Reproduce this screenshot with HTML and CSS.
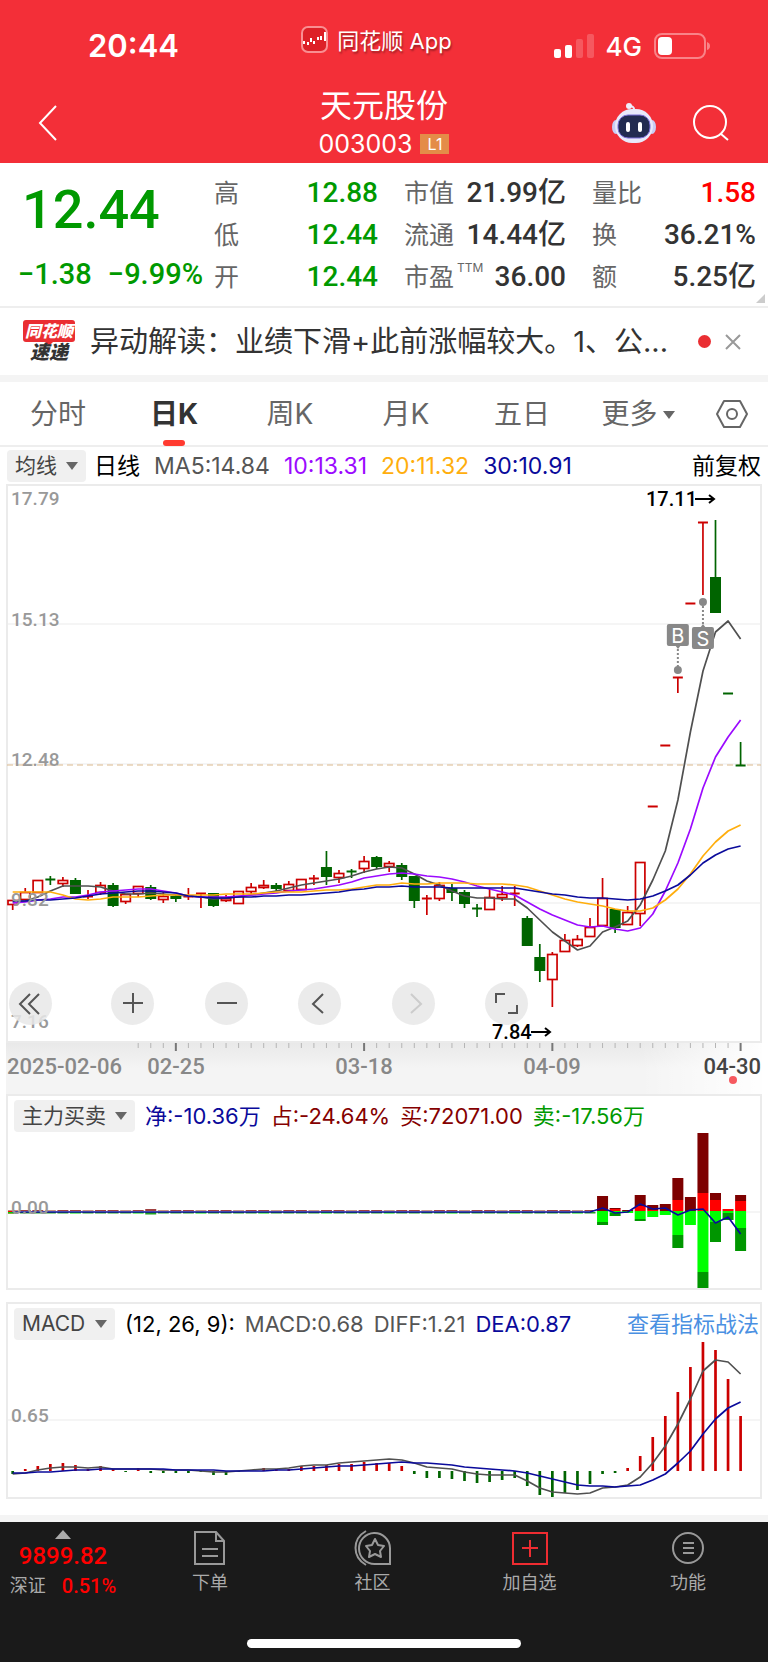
FILE: index.html
```html
<!DOCTYPE html>
<html lang="zh-CN">
<head>
    <meta charset="UTF-8">
    <meta name="viewport" content="width=device-width, initial-scale=1.0">
    <title>天元股份 003003</title>
    <link rel="stylesheet" href="styles.css">
</head>
<body>
    <header class="top">
        <div class="status">
            <span class="time">20:44</span>
            <span class="app">
                <svg width="27" height="27" viewBox="0 0 27 27">
                    <rect x="1" y="1" width="25" height="25" rx="6" fill="#dd2027" stroke="#f98f92" stroke-width="2"/>
                    <path d="M3 18v-3M7 19v-3M10 16v-4M13 18v-3M17 14v-3M20 14v-4M24 15V6" stroke="#fff" stroke-width="2"/>
                </svg>
                同花顺 App
            </span>
            <span class="signal">
                <svg width="40" height="26" viewBox="0 0 40 26" fill="#fff">
                    <rect x="0" y="16" width="7" height="9" rx="2"/>
                    <rect x="11" y="12" width="7" height="13" rx="2"/>
                    <rect x="22" y="6" width="7" height="19" rx="2" opacity=".2"/>
                    <rect x="33" y="1" width="7" height="24" rx="2" opacity=".2"/>
                </svg>
                4G
                <svg width="57" height="26" viewBox="0 0 57 26">
                    <rect x="1" y="1" width="50" height="24" rx="7" fill="none" stroke="#f98388" stroke-width="2"/>
                    <rect x="4" y="4" width="14" height="18" rx="4" fill="#fff"/>
                    <path d="M53 9q3 1 3 4t-3 4z" fill="#f98388"/>
                </svg>
            </span>
        </div>
        <div class="titleBar">
            <button class="back" aria-label="返回">
                <svg width="20" height="36" viewBox="0 0 20 36" fill="none" stroke="#fff" stroke-width="2"><path d="M18 1L2 18l16 17"/></svg>
            </button>
            <div class="stock">
                <h1>天元股份</h1>
                <p>003003 <span class="level">L1</span></p>
            </div>
            <div class="tools">
                <button aria-label="助手">
                    <svg width="44" height="42" viewBox="0 0 44 42">
                        <path d="M22 10q1-5-3-6" fill="none" stroke="#e9e8fa" stroke-width="2"/>
                        <circle cx="17" cy="4" r="3" fill="#eeeefc"/>
                        <ellipse cx="4" cy="25" rx="4" ry="7" fill="#c9cdf5"/>
                        <ellipse cx="40" cy="25" rx="4" ry="7" fill="#c9cdf5"/>
                        <rect x="3" y="7" width="38" height="34" rx="17" fill="#e8e9fa"/>
                        <rect x="6" y="13" width="32" height="23" rx="10" fill="#222b50" stroke="#7b6fd8" stroke-width="1"/>
                        <path d="M16 22v6M28 22v6" stroke="#fff" stroke-width="4" stroke-linecap="round"/>
                    </svg>
                </button>
                <button aria-label="搜索">
                    <svg width="38" height="38" viewBox="0 0 38 38" fill="none" stroke="#fff" stroke-width="2"><circle cx="18" cy="18" r="16"/><path d="M29 30l7 6"/></svg>
                </button>
            </div>
        </div>
    </header>

    <section class="quote">
        <div class="priceBox">
            <strong class="price">12.44</strong>
            <div class="change"><span>−1.38</span><span>−9.99%</span></div>
        </div>
        <dl>
            <div><dt>高</dt><dd class="green">12.88</dd></div>
            <div><dt>低</dt><dd class="green">12.44</dd></div>
            <div><dt>开</dt><dd class="green">12.44</dd></div>
        </dl>
        <dl>
            <div><dt>市值</dt><dd>21.99亿</dd></div>
            <div><dt>流通</dt><dd>14.44亿</dd></div>
            <div><dt>市盈<sup>TTM</sup></dt><dd>36.00</dd></div>
        </dl>
        <dl>
            <div><dt>量比</dt><dd class="red">1.58</dd></div>
            <div><dt>换</dt><dd>36.21%</dd></div>
            <div><dt>额</dt><dd>5.25亿</dd></div>
        </dl>
    </section>

    <section class="news">
        <div class="newsLogo"><b>同花顺</b><i>速递</i></div>
        <a href="#">异动解读：业绩下滑+此前涨幅较大。1、公...</a>
        <span class="dot"></span>
        <button aria-label="关闭">
            <svg width="16" height="18" viewBox="0 0 16 18" stroke="#999" stroke-width="2"><path d="M1 2l14 14M15 2L1 16"/></svg>
        </button>
    </section>

    <nav class="tabs">
        <button>分时</button>
        <button class="active">日K</button>
        <button>周K</button>
        <button>月K</button>
        <button>五日</button>
        <button class="more">更多</button>
        <button aria-label="设置">
            <svg width="32" height="30" viewBox="0 0 32 30" fill="none" stroke="#666" stroke-width="2"><path d="M8 2h16l7 13-7 13H8L1 15z" stroke-linejoin="round"/><circle cx="16" cy="15" r="5"/></svg>
        </button>
    </nav>

    <section class="legend maRow">
        <label class="pick"><select aria-label="均线"><option>均线</option></select></label>
        <span class="black">日线</span>
        <span class="gray">MA5:14.84</span>
        <span class="purple">10:13.31</span>
        <span class="orange">20:11.32</span>
        <span class="blue">30:10.91</span>
        <span class="right black">前复权</span>
    </section>

    <main>
        <section class="kline">
            <svg id="kChart" viewBox="0 484 768 610"></svg>
            <div class="zoomBar">
                <button aria-label="最早"><svg viewBox="0 0 43 43"><path d="M21 12L11 22l10 10M30 12L20 22l10 10"/></svg></button>
                <button aria-label="放大"><svg viewBox="0 0 43 43"><path d="M12 21h20M22 11v20"/></svg></button>
                <button aria-label="缩小"><svg viewBox="0 0 43 43"><path d="M12 21h20"/></svg></button>
                <button aria-label="向左"><svg viewBox="0 0 43 43"><path d="M25 12L15 22l10 9"/></svg></button>
                <button aria-label="向右" disabled><svg viewBox="0 0 43 43"><path d="M19 12l10 10-10 9"/></svg></button>
                <button aria-label="全屏"><svg viewBox="0 0 43 43"><path d="M11 21v-9h9M32 23v8h-9"/></svg></button>
            </div>
        </section>

        <section class="panel">
            <div class="legend">
                <label class="pick"><select aria-label="指标"><option>主力买卖</option></select></label>
                <span class="blue">净:-10.36万</span>
                <span class="darkred">占:-24.64%</span>
                <span class="darkred">买:72071.00</span>
                <span class="green">卖:-17.56万</span>
            </div>
            <svg id="flowChart" viewBox="8 1132 752 156"></svg>
        </section>

        <section class="panel">
            <div class="legend">
                <label class="pick"><select aria-label="指标"><option>MACD</option></select></label>
                <span class="black">(12, 26, 9):</span>
                <span class="gray">MACD:0.68</span>
                <span class="gray">DIFF:1.21</span>
                <span class="blue">DEA:0.87</span>
                <a class="right" href="#">查看指标战法</a>
            </div>
            <svg id="macdChart" viewBox="8 1341 752 157"></svg>
        </section>
    </main>

    <footer>
        <div class="bottomNav">
            <a class="index" href="#">
                <span class="up"></span>
                <strong>9899.82</strong>
                <span class="indexRow">深证 <b>0.51%</b></span>
            </a>
            <a href="#">
                <svg width="34" height="36" viewBox="0 0 34 36"><path d="M2 2h21l8 9v23H2zM23 2v9h8M9 19h16M9 26h16"/></svg>
                下单
            </a>
            <a href="#">
                <svg width="38" height="36" viewBox="0 0 38 36"><path d="M36 34H21A15.500 15.500 0 1 1 36 18zM12 1C-2 9-2 27 12 35"/><path d="M21 9l3 6 6 1-4 5 1 6-6-3-6 3 1-6-4-5 6-1z" stroke-linejoin="round"/></svg>
                社区
            </a>
            <a href="#">
                <svg class="add" width="36" height="36" viewBox="0 0 36 36"><path d="M1 3h34v31H1zM18 10v17M10 18h16"/></svg>
                加自选
            </a>
            <a href="#">
                <svg width="34" height="36" viewBox="0 0 34 36"><circle cx="17" cy="18" r="15"/><path d="M12 13h11M12 18h11M12 23h11"/></svg>
                功能
            </a>
        </div>
        <div class="homeBar"></div>
    </footer>

    <script>
        const X0 = 12.7, STEP = 12.55;
        const RED = "#cc0000", GREEN = "#006400", BLUE = "#0a0a9b", GRAY = "#505050";
        const x = i => X0 + STEP * i;

        const line = (x1, y1, x2, y2, color, w, extra = "") =>
            `<line x1="${x1}" y1="${y1}" x2="${x2}" y2="${y2}" stroke="${color}" stroke-width="${w}" ${extra}/>`;
        const rect = (px, y, w, h, fill, extra = "") =>
            `<rect x="${px}" y="${y}" width="${w}" height="${h}" fill="${fill}" ${extra}/>`;
        const text = (px, y, cls, str) => `<text x="${px}" y="${y}" class="${cls}">${str}</text>`;
        const curve = (ys, color) =>
            `<polyline points="${ys.map((y, i) => x(i).toFixed(1) + "," + y).join(" ")}" fill="none" stroke="${color}" stroke-width="1.700" stroke-linejoin="round"/>`;

        // colore, corpo alto, corpo basso, massimo, minimo
        const candles = [
            ["r",900,904,900,910],["r",892,899,888,900],["r",880,892,880,892],["g",879,880,876,885],["r",880,883,877,887],
            ["g",880,894,878,894],["r",896,897,890,899],["r",885,892,882,895],["g",885,906,883,907],["r",894,901,894,904],
            ["r",886,893,886,897],["g",887,899,885,900],["r",896,899,892,903],["g",896,899,895,902],["r",896,897,888,900],
            ["r",893,894,893,908],["g",893,906,893,907],["r",898,900,895,902],["r",891,903,891,903],["r",887,891,883,894],
            ["r",885,887,880,889],["g",885,889,883,891],["r",884,890,881,891],["r",879,889,879,890],["r",878,879,875,885],
            ["g",867,877,851,885],["r",873,877,870,883],["g",871,872,869,878],["r",861,868,856,873],["g",857,867,856,869],
            ["r",863,866,861,872],["g",865,877,863,880],["g",876,901,876,908],["r",898,899,895,915],["r",885,898,882,901],
            ["g",888,893,884,901],["g",892,904,890,908],["g",908,909,904,917],["r",897,909,889,909],["r",894,897,886,901],
            ["r",893,894,886,906],["g",918,946,916,946],["g",957,971,944,982],["r",954,979,952,1007],["r",940,951,934,951],
            ["r",939,945,935,947],["r",927,936,918,936],["r",898,925,878,927],["g",909,928,909,933],["r",912,924,906,924],
            ["r",862,913,862,926],["r",806,806,806,806],["r",745,745,745,745],["r",677,677,677,693],["r",603,603,603,603],
            ["r",522,522,522,595],["g",577,613,520,613],["g",693,693,693,693],["g",765,765,742,765]
        ];
        const ma5 = [902,901,897,891,886,886,886,887,891,894,894,893,894,895,896,897,899,898,897,895,893,891,888,885,883,881,879,876,872,869,867,868,874,881,885,891,896,898,898,899,899,908,920,932,941,950,946,932,927,921,905,880,851,800,732,671,632,621,639];
        const ma10 = [903,902,900,899,897,897,895,892,891,890,889,889,891,893,896,897,897,897,896,895,894,893,891,890,889,887,885,882,878,876,874,873,874,876,877,879,882,886,889,892,895,902,909,915,920,925,927,926,929,931,928,914,891,863,829,788,757,737,720];
        const ma20 = [892,892,892,892,895,899,900,899,897,897,897,896,895,895,895,895,895,894,894,894,893,892,892,892,891,890,890,889,887,885,885,883,884,884,883,883,883,884,884,884,885,887,891,895,899,902,904,906,909,911,911,908,900,889,874,856,842,831,825];
        const ma30 = [901,901,900,900,899,898,896,894,893,892,891,891,892,893,896,897,898,898,897,897,896,896,895,895,894,893,892,890,889,887,887,886,887,887,887,888,888,888,888,888,888,890,892,894,895,897,898,898,899,900,899,896,891,885,875,863,855,849,846];

        function drawKline() {
            let s = `<defs><linearGradient id="axisBg" x1="0" x2="0" y1="0" y2="1"><stop offset="0" stop-color="#e9e9e9"/><stop offset=".5" stop-color="#f4f4f4"/></linearGradient>
                <linearGradient id="fade" x1="0" x2="1" y1="0" y2="0"><stop offset="0" stop-color="#fff" stop-opacity="0"/><stop offset="1" stop-color="#fff"/></linearGradient></defs>`;
            s += rect(6, 1043, 756, 51, "url(#axisBg)") + rect(640, 1043, 128, 51, "url(#fade)");
            s += rect(7, 485, 754, 557, "none", 'stroke="#ebebeb" stroke-width="2"');
            [624, 764, 903].forEach(y => s += line(7, y, 761, y, "#ebebeb", 1));
            s += line(7, 765, 761, 765, "#dcb98c", 1, 'stroke-dasharray="6 4"');

            candles.forEach(([c, top, bottom, high, low], i) => {
                const color = c === "r" ? RED : GREEN;
                const cx = x(i);
                if (bottom - top < 2) {
                    s += line(cx - 5, top + .5, cx + 5, top + .5, color, 2);
                    if (low > high) s += line(cx, high, cx, low, color, 1.7);
                    return;
                }
                if (high < top) s += line(cx, high, cx, top, color, 1.7);
                if (low > bottom) s += line(cx, bottom, cx, low, color, 1.7);
                if (c === "g") s += rect(cx - 5.5, top, 11, bottom - top, color);
                else s += rect(cx - 4.7, top + .5, 9.4, bottom - top, "#fff", `stroke="${color}" stroke-width="1.700"`);
            });
            s += curve(ma5, GRAY) + curve(ma10, "#9b0aff") + curve(ma20, "#ffae0d") + curve(ma30, BLUE);

            s += text(11, 505, "scale", "17.79") + text(11, 626, "scale", "15.13") + text(11, 766, "scale", "12.48");
            s += text(11, 906, "scale", "9.82") + text(11, 1028, "scale", "7.16");
            s += text(646, 506, "mark", "17.11") + line(695, 499, 713, 499, "#000", 2) + '<path d="M709 495l5 4-5 4" fill="none" stroke="#000" stroke-width="2"/>';
            s += text(492, 1039, "mark", "7.84") + line(531, 1032, 549, 1032, "#000", 2) + '<path d="M545 1028l5 4-5 4" fill="none" stroke="#000" stroke-width="2"/>';

            // punti di acquisto e vendita
            s += line(x(53), 645, x(53), 667, "#888", 2, 'stroke-dasharray="2 2"') + `<circle cx="${x(53)}" cy="670" r="4" fill="#888"/>`;
            s += rect(x(53) - 11, 624, 22, 22, "#888", 'rx="2"') + `<path d="M675 645l3 4 3-4z" fill="#888"/>` + text(x(53), 643, "badge", "B");
            s += line(x(55), 606, x(55), 628, "#888", 2, 'stroke-dasharray="2 2"') + `<circle cx="${x(55)}" cy="602" r="4" fill="#888"/>`;
            s += rect(x(55) - 11, 627, 22, 22, "#888", 'rx="2"') + `<path d="M700 628l3-4 3 4z" fill="#888"/>` + text(x(55), 646, "badge", "S");

            for (let i = 10; i < 59; i++) {
                const big = (i - 13) % 15 === 0;
                s += line(x(i), 1043, x(i), big ? 1051 : 1048, big ? "#777" : "#b5b5b5", big ? 2 : 1);
            }
            s += text(7, 1074, "date", "2025-02-06") + text(176, 1074, "date mid", "02-25") + text(364, 1074, "date mid", "03-18");
            s += text(552, 1074, "date mid", "04-09") + text(761, 1074, "date last", "04-30");
            s += '<circle cx="733" cy="1080" r="4" fill="#f6595f"/>';
            document.getElementById("kChart").innerHTML = s;
        }

        // indice, rosso scuro, rosso, verde, verde scuro
        const flow = [
            [47,1196,1211,1222,1225],[48,1208,1209,1213,1216],[49,1210,1211,1213,1213],[50,1195,1206,1219,1221],
            [51,1205,1210,1217,1217],[52,1204,1211,1215,1215],[53,1178,1200,1235,1248],[54,1197,1211,1225,1225],
            [55,1133,1193,1272,1288],[56,1193,1200,1222,1242],[57,1209,1209,1213,1220],[58,1195,1201,1228,1251]
        ];
        const flowTail = [1208,1213,1212,1204,1209,1208,1215,1210,1209,1223,1217,1234];

        function drawFlow() {
            let s = line(8, 1212, 760, 1212, "#ebebeb", 1);
            s += line(8, 1212, 14, 1212, "#f00", 3);
            for (let i = 0; i < 47; i++) {
                const h = i === 11 ? 2 : 1;
                s += rect(x(i) - 5.5, 1211 - h, 11, h, i % 3 ? "#a04040" : "#c89080");
                s += rect(x(i) - 5.5, 1212, 11, h + .5, i % 5 ? "#20a020" : "#00d800");
            }
            flow.forEach(([i, a, b, c, d]) => {
                const px = x(i) - 5.5;
                s += rect(px, a, 11, b - a, "#7d0000") + rect(px, b, 11, 1211 - b, "#f00");
                s += rect(px, 1211, 11, c - 1211, "#0f0") + rect(px, c, 11, d - c, "#009600");
            });
            s += curve(Array(47).fill(1212).concat(flowTail), BLUE);
            s += text(11, 1214, "scale", "0.00");
            document.getElementById("flowChart").innerHTML = s;
        }

        const macd = [1475,1470,1467,1465,1464,1466,1470,1467,1470,1473,1469,1474,1474,1474,1474,1473,1476,1476,1473,1472,1469,1470,1470,1467,1467,1466,1465,1465,1463,1464,1464,1467,1475,1479,1479,1480,1482,1484,1483,1481,1479,1487,1496,1498,1494,1491,1485,1475,1474,1469,1457,1438,1417,1393,1368,1343,1351,1380,1417];
        const diff = [1475,1474,1471,1469,1468,1468,1469,1468,1470,1470,1470,1470,1471,1471,1471,1472,1473,1473,1472,1471,1470,1470,1469,1467,1466,1466,1464,1463,1462,1461,1460,1461,1464,1468,1469,1470,1473,1475,1476,1476,1476,1482,1489,1493,1494,1495,1494,1489,1488,1486,1478,1464,1447,1425,1400,1372,1361,1363,1375];
        const dea = [1474,1474,1473,1473,1472,1471,1471,1470,1470,1470,1470,1470,1470,1471,1471,1471,1471,1472,1472,1472,1472,1471,1471,1470,1469,1468,1467,1467,1466,1465,1464,1463,1464,1464,1465,1466,1468,1469,1470,1471,1472,1474,1477,1480,1483,1486,1487,1487,1488,1487,1486,1481,1475,1464,1452,1435,1420,1409,1403];

        function drawMacd() {
            let s = line(8, 1421, 760, 1421, "#ebebeb", 1);
            macd.forEach((y, i) => s += line(x(i), 1472, x(i), y, y < 1472 ? RED : GREEN, 2.7));
            s += curve(diff, GRAY) + curve(dea, BLUE);
            s += text(11, 1423, "scale", "0.65");
            document.getElementById("macdChart").innerHTML = s;
        }

        drawKline();
        drawFlow();
        drawMacd();
    </script>
</body>
</html>
```
FILE: styles.css
```css
* {
    box-sizing: border-box;
}

body {
    margin: 0;
    background: white;
    font-family: Inter, "Noto Sans CJK SC", sans-serif;
    color: #333;
}

button, select {
    font-family: inherit;
    border: none;
    background: none;
    padding: 0;
    cursor: pointer;
}

a {
    text-decoration: none;
    color: inherit;
}

svg {
    display: block;
}

h1, p, dl, dd {
    margin: 0;
}

/* header */
.top {
    background: #f32f38;
    color: white;
    height: 163px;
}

.status {
    display: grid;
    grid-template-columns: 1fr auto 1fr;
    height: 83px;
    padding: 26px 57px 0 42px;
}

.time {
    padding-left: 46px;
    font-size: 31px;
    line-height: 40px;
    font-weight: 600;
}

.app {
    display: flex;
    gap: 9px;
    font-size: 22px;
    line-height: 30px;
    text-shadow: 1px 2px 2px rgba(0, 0, 0, .35);
}

.signal {
    display: flex;
    justify-content: flex-end;
    align-items: center;
    gap: 12px;
    height: 40px;
    font-size: 26px;
    font-weight: 500;
}

.titleBar {
    display: grid;
    grid-template-columns: 1fr auto 1fr;
    align-items: center;
    height: 80px;
    padding: 0 38px;
}

.back {
    justify-self: start;
}

.stock {
    text-align: center;
}

.stock h1 {
    font-size: 32px;
    line-height: 42px;
    font-weight: 400;
}

.stock p {
    display: flex;
    align-items: center;
    justify-content: center;
    gap: 8px;
    font-size: 25px;
    line-height: 34px;
}

.level {
    background: #e48c48;
    font-size: 16px;
    line-height: 20px;
    width: 29px;
}

.tools {
    display: flex;
    justify-content: flex-end;
    align-items: center;
    gap: 36px;
}

/* quotazione */
.quote {
    position: relative;
    display: grid;
    grid-template-columns: 196fr 190fr 188fr 164fr;
    padding: 9px 12px 9px 18px;
    height: 145px;
    border-bottom: 2px solid #eee;
}

.quote::after {
    content: "";
    position: absolute;
    right: 3px;
    bottom: 3px;
    border-left: 9px solid transparent;
    border-bottom: 9px solid #ccc;
}

.priceBox, .quote dd {
    font-family: Roboto, "Noto Sans CJK SC", sans-serif;
    font-weight: 500;
    white-space: nowrap;
}

.priceBox {
    color: #009900;
    padding-right: 11px;
}

.price {
    display: block;
    padding-left: 4px;
    font-size: 54px;
    line-height: 76px;
    font-weight: 500;
}

.change {
    display: flex;
    justify-content: space-between;
    font-size: 29px;
    line-height: 52px;
}

.quote dl {
    padding-right: 26px;
}

.quote dl:last-child {
    padding-right: 0;
}

.quote dl div {
    display: flex;
    justify-content: space-between;
    align-items: center;
    height: 42px;
}

.quote dt {
    display: flex;
    font-size: 25px;
    line-height: 42px;
    color: #666;
    white-space: nowrap;
}

.quote sup {
    margin-left: 3px;
    font-size: 12px;
    line-height: 24px;
}

.quote dd {
    font-size: 28px;
    line-height: 42px;
}

.quote .green, .green {
    color: #009900;
}

.quote .red {
    color: #ff0000;
}

/* notizie */
.news {
    display: flex;
    align-items: center;
    height: 74px;
    padding: 0 27px 0 22px;
    border-bottom: 7px solid #f4f4f4;
}

.newsLogo {
    display: flex;
    flex-direction: column;
    align-items: center;
    width: 54px;
    margin-right: 14px;
    font-style: italic;
    font-weight: 900;
}

.newsLogo b {
    background: #ea2e32;
    color: white;
    width: 52px;
    border-radius: 3px;
    font-size: 16px;
    line-height: 22px;
    text-align: center;
}

.newsLogo i {
    font-size: 19px;
    line-height: 22px;
}

.newsLogo i::before {
    content: "";
    display: block;
    width: 0;
    margin: 0 auto -4px;
    border: 4px solid transparent;
    border-top-color: #ea2e32;
    border-bottom: none;
}

.news a {
    flex: 1;
    white-space: nowrap;
    font-size: 29px;
    line-height: 44px;
}

.dot {
    width: 13px;
    height: 13px;
    border-radius: 50%;
    background: #ea2e32;
    margin-right: 14px;
}

/* schede */
.tabs {
    display: grid;
    grid-template-columns: repeat(6, 116fr) 72fr;
    height: 65px;
    border-bottom: 2px solid #eee;
}

.tabs button {
    position: relative;
    font-size: 28px;
    line-height: 64px;
    color: #666;
}

.tabs svg {
    margin: 0 auto;
}

.tabs .active {
    color: #333;
    font-weight: bold;
}

.tabs .active::after {
    content: "";
    position: absolute;
    left: 50%;
    bottom: 0;
    width: 22px;
    height: 6px;
    margin-left: -11px;
    border-radius: 3px;
    background: #ff3b30;
}

.more::after, .pick::after {
    content: "";
    display: inline-block;
    border: 6px solid transparent;
    border-top: 8px solid #666;
    border-bottom: none;
}

.more::after {
    margin-left: 5px;
    vertical-align: 5px;
}

/* legenda */
.legend {
    display: flex;
    align-items: center;
    gap: 10px;
    height: 36px;
    padding: 4px 1px 0 6px;
    font-size: 22px;
    line-height: 32px;
    white-space: nowrap;
}

.maRow {
    gap: 14px;
    height: 37px;
    padding: 0 7px;
    font-size: 23px;
}

.maRow .pick {
    margin-right: -6px;
}

.pick {
    display: flex;
    align-items: center;
    gap: 9px;
    height: 32px;
    padding: 0 8px;
    border-radius: 4px;
    background: #f0f0f0;
}

.pick select {
    appearance: none;
    font-size: 21px;
    line-height: 32px;
    color: #444;
}

.right {
    margin-left: auto;
}

.legend a {
    color: #4a90e2;
}

.black { color: #000; }
.gray { color: #555; }
.purple { color: #9b0aff; }
.orange { color: #ffae0d; }
.blue { color: #0a0a9b; }
.darkred { color: #850000; }

/* grafici */
.kline {
    position: relative;
}

.kline > svg, .panel > svg {
    width: 100%;
}

.panel {
    margin: 0 6px 12px;
    border: 2px solid #ebebeb;
}

.zoomBar {
    position: absolute;
    left: 9px;
    right: 240px;
    bottom: 69px;
    display: flex;
    justify-content: space-between;
}

.zoomBar button {
    width: 43px;
    height: 43px;
    border-radius: 50%;
    background: rgba(232, 232, 232, .85);
}

.zoomBar button:first-child {
    margin-right: 9px;
}

.zoomBar path {
    fill: none;
    stroke: #555;
    stroke-width: 2;
}

.zoomBar button:disabled path {
    stroke: #ccc;
}

.scale, .date, .mark {
    font-family: Roboto, sans-serif;
    font-size: 19px;
    fill: #999;
    font-weight: 500;
}

.mark {
    font-size: 20px;
    fill: #000;
}

.date {
    font-size: 22px;
    fill: #888;
}

.mid {
    text-anchor: middle;
}

.last {
    text-anchor: end;
    fill: #444;
}

.badge {
    font-size: 20px;
    fill: #fff;
    text-anchor: middle;
}

/* barra in basso */
footer {
    background: #1a1a1a;
    border-top: 7px solid #f4f4f4;
    margin-top: 16px;
    height: 148px;
    color: #aaa;
}

.bottomNav {
    display: grid;
    grid-template-columns: 126fr 168fr 157fr 157fr 160fr;
    height: 116px;
}

.bottomNav a {
    display: flex;
    flex-direction: column;
    align-items: center;
    gap: 4px;
    padding-top: 8px;
    font-size: 18px;
    line-height: 26px;
}

.bottomNav svg {
    fill: none;
    stroke: #999;
    stroke-width: 2;
}

.bottomNav .add {
    stroke: #ee2c31;
}

.bottomNav .index {
    gap: 0;
    color: #ff0000;
}

.up {
    border: 8px solid transparent;
    border-bottom: 9px solid #aaa;
    border-top: none;
}

.index strong, .index b {
    font-family: Roboto, sans-serif;
    font-weight: 500;
}

.index strong {
    font-size: 24px;
    line-height: 34px;
}

.indexRow {
    display: flex;
    gap: 16px;
    color: #aaa;
}

.index b {
    font-size: 20px;
    color: #ff0000;
}

.homeBar {
    width: 274px;
    height: 9px;
    margin: 1px auto 0;
    border-radius: 5px;
    background: white;
}
```
